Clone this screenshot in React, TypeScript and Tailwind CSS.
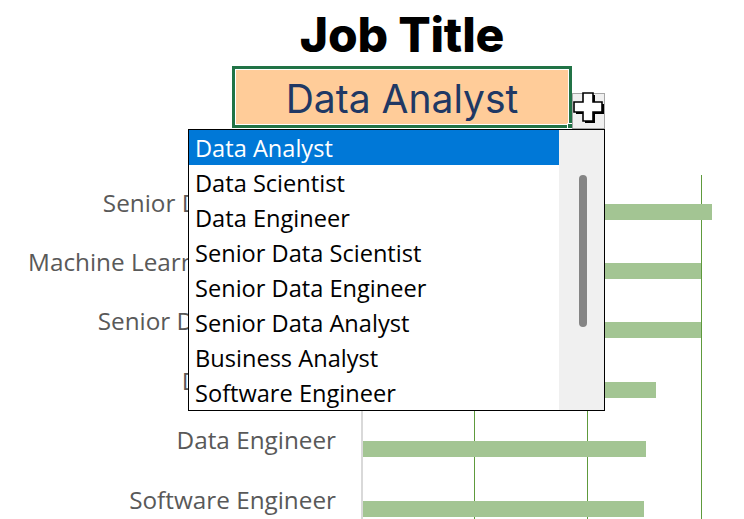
import React from "react"

type Row = { title: string; value: number }

// chart rows behind the open dropdown
const ROWS: Row[] = [
  { title: "Senior Data Scientist", value: 154.6 },
  { title: "Machine Learning Engineer", value: 149.6 },
  { title: "Senior Data Engineer", value: 149.6 },
  { title: "Data Scientist", value: 129.7 },
  { title: "Data Engineer", value: 125.3 },
  { title: "Software Engineer", value: 124.4 },
]

const OPTIONS = [
  "Data Analyst",
  "Data Scientist",
  "Data Engineer",
  "Senior Data Scientist",
  "Senior Data Engineer",
  "Senior Data Analyst",
  "Business Analyst",
  "Software Engineer",
]

const PX_PER_UNIT = 113.3 / 50

function CrossCursor() {
  const d = "M10 1 H20 V10 H29 V20 H20 V29 H10 V20 H1 V10 H10 Z"
  return (
    <svg width="33" height="33" viewBox="0 0 33 33">
      <path d={d} transform="translate(2 2)" fill="#000" />
      <path d={d} fill="#fff" stroke="#000" strokeWidth="1.6" strokeLinejoin="miter" />
    </svg>
  )
}

export default function App() {
  return (
    <div className="relative w-[744px] h-[519px] overflow-hidden bg-white font-['Open_Sans',sans-serif]">
      {/* header: title + selected cell */}
      <div className="ml-[232px] w-[340px] flex flex-col items-center">
        <h1 className="mt-[11px] h-[55px] text-[48px] leading-none font-extrabold text-black font-['Inter',sans-serif] tracking-[-0.2px]">
          Job Title
        </h1>
        <div className="relative w-[340px] h-[62px] border-[3px] border-[#217346] bg-white p-px">
          <div className="h-full bg-[#ffcc99] flex items-center justify-center pt-[3px]">
            <span className="text-[39px] leading-none text-[#203864] font-['Inter',sans-serif]">Data Analyst</span>
          </div>
          <div className="absolute -right-[4px] -bottom-[4px] w-[6px] h-[6px] bg-[#217346] border border-white" />
        </div>
      </div>

      {/* bar chart */}
      <div className="relative mt-[47px] pt-[7px] flex">
        <div className="w-[336px] flex flex-col">
          {ROWS.map((r) => (
            <div key={r.title} className="h-[59.4px] flex items-center justify-end">
              <span className="pb-[18px] text-[24.3px] leading-none text-[#595959] whitespace-nowrap">{r.title}</span>
            </div>
          ))}
        </div>
        <div className="relative ml-[25px] flex-1 border-l-2 border-[#d9d9d9] flex flex-col">
          <div className="absolute left-[111px] -top-[7px] bottom-0 w-px bg-[#5e9a3c]" />
          <div className="absolute left-[224px] -top-[7px] bottom-0 w-px bg-[#5e9a3c]" />
          <div className="absolute left-[338px] -top-[7px] bottom-0 w-px bg-[#5e9a3c]" />
          {ROWS.map((r) => (
            <div key={r.title} className="relative h-[59.4px] flex items-center">
              <div className="h-[16px] bg-[#a3c593]" style={{ width: r.value * PX_PER_UNIT - 1 }} />
            </div>
          ))}
        </div>
      </div>

      {/* dropdown arrow button with cursor over it */}
      <div className="absolute left-[572px] top-[93px] w-[33px] h-[36px] bg-[#f0f0f0] border border-[#a6a6a6]" />
      <div className="absolute left-[573px] top-[92px]">
        <CrossCursor />
      </div>

      {/* open validation list */}
      <div className="absolute left-[188px] top-[129px] w-[417px] h-[282px] border border-black bg-white flex">
        <ul className="flex-1 flex flex-col">
          {OPTIONS.map((o, i) => (
            <li
              key={o}
              className={`h-[35px] pl-[6px] pt-[3px] flex items-center text-[23.6px] leading-none whitespace-nowrap ${
                i === 0 ? "bg-[#0078d7] text-white" : "text-black"
              }`}
            >
              {o}
            </li>
          ))}
        </ul>
        <div className="w-[45px] bg-[#f0f0f0] flex justify-center pt-[45px]">
          <div className="ml-[2px] w-[8px] h-[152px] rounded-full bg-[#858585]" />
        </div>
      </div>
    </div>
  )
}
